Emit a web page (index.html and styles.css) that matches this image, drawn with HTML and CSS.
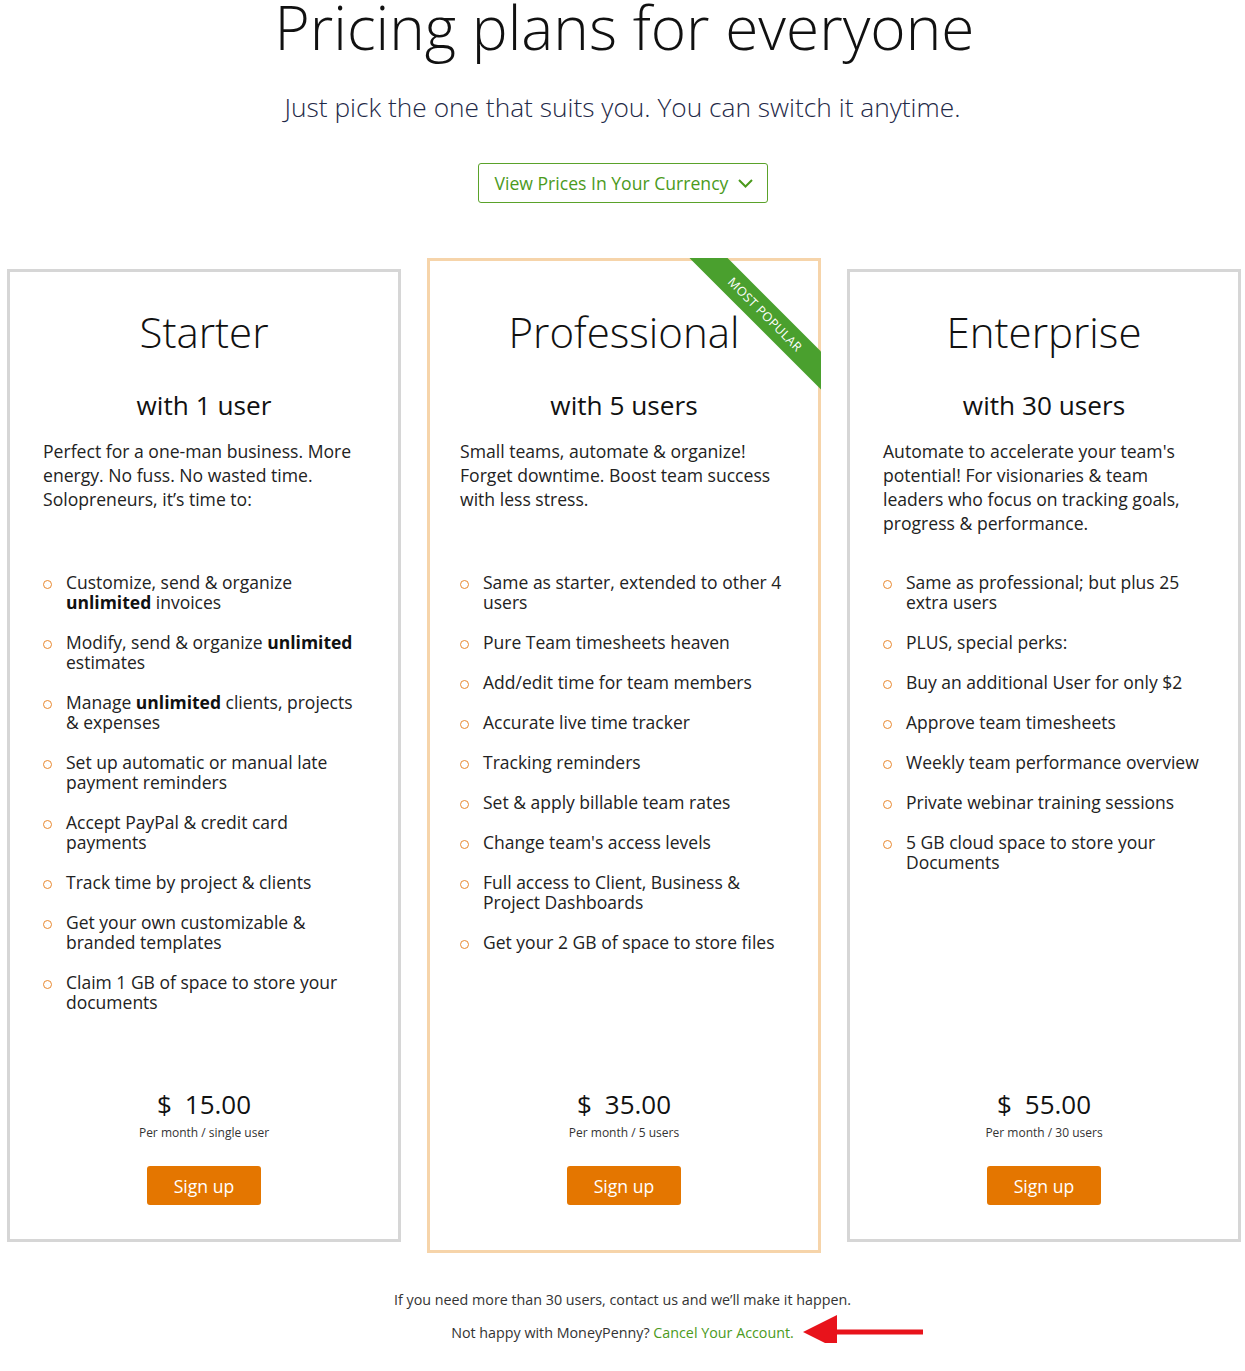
FILE: index.html
```html
<!DOCTYPE html>
<html lang="en">
<head>
<meta charset="utf-8">
<title>Pricing plans for everyone</title>
<link rel="stylesheet" href="styles.css">
</head>
<body>
<header class="hero">
  <h1 class="hero-title">Pricing plans for everyone</h1>
  <p class="hero-sub">Just pick the one that suits you. You can switch it anytime.</p>
  <button class="currency-btn" type="button">View Prices In Your Currency
    <svg class="chev" width="15" height="9" viewBox="0 0 15 9"><polyline points="1,1 7.5,7.5 14,1" fill="none" stroke="#4b9a1c" stroke-width="2"/></svg>
  </button>
</header>

<main class="plans">
  <section class="card">
    <h2 class="card-title">Starter</h2>
    <h3 class="card-users">with 1 user</h3>
    <p class="card-desc">Perfect for a one-man business. More energy. No fuss. No wasted time. Solopreneurs, it’s time to:</p>
    <ul class="features">
      <li><span>Customize, send &amp; organize <b>unlimited</b> invoices</span></li>
      <li><span>Modify, send &amp; organize <b>unlimited</b> estimates</span></li>
      <li><span>Manage <b>unlimited</b> clients, projects &amp; expenses</span></li>
      <li><span>Set up automatic or manual late payment reminders</span></li>
      <li><span>Accept PayPal &amp; credit card payments</span></li>
      <li><span>Track time by project &amp; clients</span></li>
      <li><span>Get your own customizable &amp; branded templates</span></li>
      <li><span>Claim 1 GB of space to store your documents</span></li>
    </ul>
    <div class="price-block">
      <div class="price"><span class="cur">$</span>15.00</div>
      <div class="per">Per month / single user</div>
      <button class="signup" type="button">Sign up</button>
    </div>
  </section>

  <section class="card featured">
    <div class="ribbon-wrap"><div class="ribbon">MOST POPULAR</div></div>
    <h2 class="card-title">Professional</h2>
    <h3 class="card-users">with 5 users</h3>
    <p class="card-desc">Small teams, automate &amp; organize! Forget downtime. Boost team success with less stress.</p>
    <ul class="features">
      <li><span>Same as starter, extended to other 4 users</span></li>
      <li><span>Pure Team timesheets heaven</span></li>
      <li><span>Add/edit time for team members</span></li>
      <li><span>Accurate live time tracker</span></li>
      <li><span>Tracking reminders</span></li>
      <li><span>Set &amp; apply billable team rates</span></li>
      <li><span>Change team's access levels</span></li>
      <li><span>Full access to Client, Business &amp; Project Dashboards</span></li>
      <li><span>Get your 2 GB of space to store files</span></li>
    </ul>
    <div class="price-block">
      <div class="price"><span class="cur">$</span>35.00</div>
      <div class="per">Per month / 5 users</div>
      <button class="signup" type="button">Sign up</button>
    </div>
  </section>

  <section class="card">
    <h2 class="card-title">Enterprise</h2>
    <h3 class="card-users">with 30 users</h3>
    <p class="card-desc">Automate to accelerate your team's potential! For visionaries &amp; team leaders who focus on tracking goals, progress &amp; performance.</p>
    <ul class="features">
      <li><span>Same as professional; but plus 25 extra users</span></li>
      <li><span>PLUS, special perks:</span></li>
      <li><span>Buy an additional User for only $2</span></li>
      <li><span>Approve team timesheets</span></li>
      <li><span>Weekly team performance overview</span></li>
      <li><span>Private webinar training sessions</span></li>
      <li><span>5 GB cloud space to store your Documents</span></li>
    </ul>
    <div class="price-block">
      <div class="price"><span class="cur">$</span>55.00</div>
      <div class="per">Per month / 30 users</div>
      <button class="signup" type="button">Sign up</button>
    </div>
  </section>
</main>

<footer class="foot">
  <p class="foot-line first">If you need more than 30 users, contact us and we’ll make it happen.</p>
  <p class="foot-line"><span class="cancel-line">Not happy with MoneyPenny? <a class="cancel" href="#">Cancel Your Account.</a><svg class="arrow" width="120" height="36" viewBox="0 0 120 36"><polygon points="0,18 34,1 34,35" fill="#e8131b"/><rect x="30" y="15.5" width="90" height="5" fill="#e8131b"/></svg></span></p>
</footer>
</body>
</html>
```

FILE: styles.css
```css
*, *::before, *::after { box-sizing: border-box; }

body {
  margin: 0;
  background: #fff;
  font-family: "Open Sans", "Liberation Sans", sans-serif;
  color: #222;
  width: 1245px;
}

.hero {
  display: flex;
  flex-direction: column;
  align-items: center;
}

.hero-title {
  margin: 0 0 0 4px;
  font-size: 60.3px;
  line-height: 54px;
  font-weight: 300;
  color: #111;
}

.hero-sub {
  margin: 37px 0 0;
  font-size: 26.3px;
  line-height: 32px;
  font-weight: 300;
  color: #1f2a48;
}

.currency-btn {
  margin-top: 40px;
  height: 40px;
  width: 290px;
  padding: 0 14px 0 16px;
  display: flex;
  align-items: center;
  justify-content: space-between;
  border: 1px solid #5aa22a;
  border-radius: 3px;
  background: #fff;
  font-family: "Open Sans", "Liberation Sans", sans-serif;
  font-size: 17.6px;
  color: #4b9a1c;
  cursor: pointer;
}

.chev { display: block; }

.plans {
  margin: 66px 0 0 7px;
  width: 1234px;
  display: grid;
  grid-template-columns: 394px 394px 394px;
  column-gap: 26px;
  align-items: stretch;
}

.card {
  position: relative;
  display: flex;
  flex-direction: column;
  border: 3px solid #d6d6d6;
  padding: 32px 33px 34px;
  background: #fff;
}

.card.featured {
  border-color: #f6d4aa;
  margin: -11px 0;
  padding: 43px 36px 45px 30px;
}

.ribbon-wrap {
  position: absolute;
  top: -3px;
  right: -3px;
  width: 140px;
  height: 140px;
  overflow: hidden;
}

.ribbon {
  position: absolute;
  left: -16px;
  top: 43px;
  width: 200px;
  height: 27px;
  line-height: 27px;
  background: #4aa02e;
  color: #fff;
  text-align: center;
  font-size: 12.5px;
  letter-spacing: 0.4px;
  transform: rotate(45deg);
}

.card-title {
  margin: 0;
  text-align: center;
  font-size: 42px;
  line-height: 56px;
  font-weight: 300;
  color: #111;
}

.card.featured .card-title,
.card.featured .card-users,
.card.featured .price-block {
  margin-left: 3px;
  margin-right: -3px;
}

.card-users {
  margin: 29px 0 0;
  text-align: center;
  font-size: 26.2px;
  line-height: 32px;
  font-weight: 400;
  color: #111;
}

.card-desc {
  margin: 18px 0 37px;
  min-height: 96px;
  font-size: 17.6px;
  line-height: 24px;
  color: #222;
}

.features {
  list-style: none;
  margin: 0 -1px 0 0;
  padding: 0;
}

.features li {
  display: flex;
  font-size: 17.5px;
  line-height: 20px;
  margin-bottom: 20px;
  color: #222;
}

.features li::before {
  content: "";
  flex: none;
  width: 9px;
  height: 9px;
  margin: 8px 14px 0 0;
  border: 1px solid #e8882f;
  border-radius: 50%;
}

.features b { font-weight: 700; color: #111; }

.price-block {
  margin-top: auto;
  padding-top: 57px;
  display: flex;
  flex-direction: column;
  align-items: center;
}

.price {
  font-size: 26px;
  line-height: 30px;
  color: #111;
}

.cur { margin-right: 13px; }

.per {
  margin-top: 6px;
  font-size: 12px;
  line-height: 16px;
  color: #333;
}

.signup {
  margin-top: 25px;
  width: 114px;
  height: 39px;
  border: 0;
  border-radius: 3px;
  background: #e47600;
  color: #fff;
  font-family: "Open Sans", "Liberation Sans", sans-serif;
  font-size: 17.6px;
  cursor: pointer;
}

.foot {
  margin-top: 48px;
  text-align: center;
}

.foot-line {
  margin: 0;
  font-size: 14.3px;
  line-height: 20px;
  color: #333;
}

.foot-line.first { margin-bottom: 13px; }

.cancel-line {
  position: relative;
  display: inline-block;
}

.cancel {
  color: #4b9a1c;
  text-decoration: none;
}

.arrow {
  position: absolute;
  left: calc(100% + 9px);
  top: -9px;
}
```
